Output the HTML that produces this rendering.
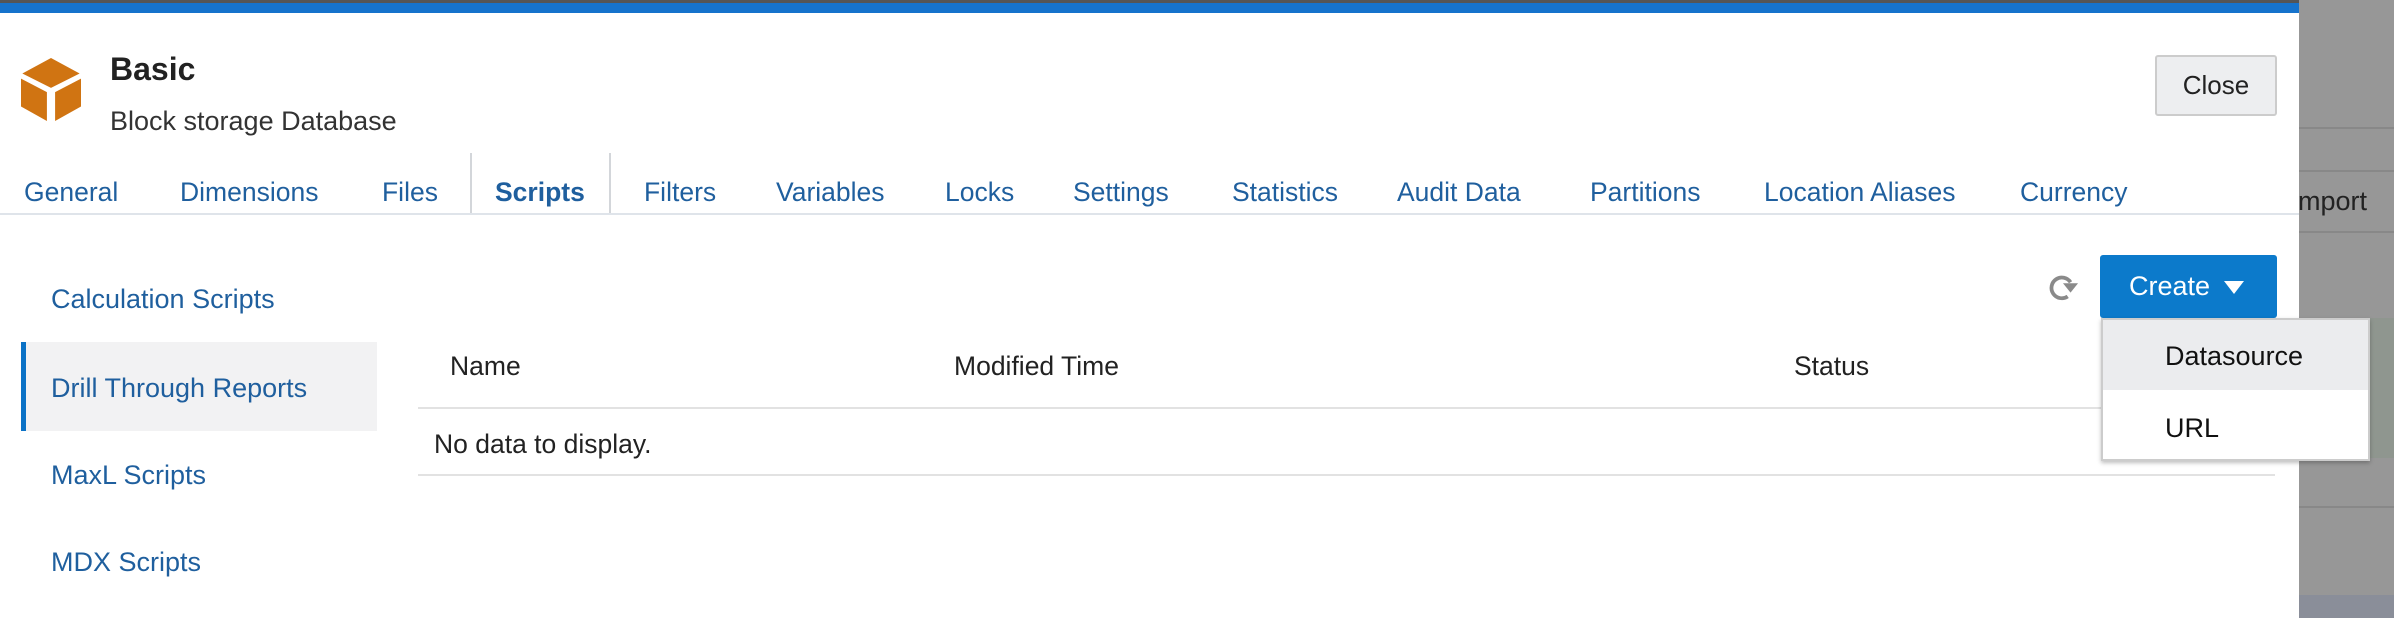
<!DOCTYPE html>
<html><head><meta charset="utf-8"><style>
*{margin:0;padding:0;box-sizing:border-box}
body{width:2394px;height:618px;overflow:hidden;background:#999;font-family:"Liberation Sans",sans-serif;position:relative}
.a{position:absolute;white-space:nowrap}
.tab{position:absolute;top:174px;font-size:26.5px;color:#1f5f9e;line-height:36px}
.nav{position:absolute;left:51px;font-size:27px;color:#1f5f9e;line-height:36px}
.th{position:absolute;top:348px;font-size:26.5px;color:#222;line-height:36px}
</style></head><body>
<div class="a" style="left:0;top:0;width:2394px;height:3px;background:#555"></div>
<div class="a" style="left:2299px;top:0;width:95px;height:618px;background:#979797"></div>
<div class="a" style="left:2299px;top:127px;width:95px;height:2px;background:#888"></div>
<div class="a" style="left:2299px;top:170px;width:95px;height:2px;background:#888"></div>
<div class="a" style="left:2299px;top:231px;width:95px;height:2px;background:#888"></div>
<div class="a" style="left:2299px;top:318px;width:95px;height:140px;background:#8f968f"></div>
<div class="a" style="left:2299px;top:506px;width:95px;height:2px;background:#888"></div>
<div class="a" style="left:2299px;top:595px;width:95px;height:23px;background:#8a8e99"></div>
<div class="a" style="left:2298px;top:186px;font-size:27px;color:#222">mport</div>
<div class="a" style="left:0;top:3px;width:2299px;height:615px;background:#fff"></div>
<div class="a" style="left:0;top:3px;width:2299px;height:10px;background:#1673cc"></div>
<svg class="a" style="left:21px;top:58px" width="60" height="64" viewBox="0 0 44 62" preserveAspectRatio="none">
<path d="M22 0 L43 15 L22 29 L1 15 Z" fill="#d07412"/>
<path d="M0 20 L19 33 L19 61 L0 47 Z" fill="#d07412"/>
<path d="M44 20 L25 33 L25 61 L44 47 Z" fill="#d07412"/>
</svg>
<div class="a" style="left:110px;top:50px;font-size:32px;font-weight:bold;color:#222;line-height:38px">Basic</div>
<div class="a" style="left:110px;top:103px;font-size:27px;color:#333;line-height:36px">Block storage Database</div>
<div class="a" style="left:2155px;top:55px;width:122px;height:61px;background:#edeef0;border:2px solid #ccc;border-radius:3px;font-size:26px;color:#222;text-align:center;line-height:57px">Close</div>
<div class="tab" style="left:24px">General</div>
<div class="tab" style="left:180px">Dimensions</div>
<div class="tab" style="left:382px">Files</div>
<div class="tab" style="left:495px;font-weight:bold">Scripts</div>
<div class="tab" style="left:644px">Filters</div>
<div class="tab" style="left:776px">Variables</div>
<div class="tab" style="left:945px">Locks</div>
<div class="tab" style="left:1073px">Settings</div>
<div class="tab" style="left:1232px">Statistics</div>
<div class="tab" style="left:1397px">Audit Data</div>
<div class="tab" style="left:1590px">Partitions</div>
<div class="tab" style="left:1764px">Location Aliases</div>
<div class="tab" style="left:2020px">Currency</div>
<div class="a" style="left:470px;top:153px;width:2px;height:61px;background:#d3d6da"></div>
<div class="a" style="left:609px;top:153px;width:2px;height:61px;background:#d3d6da"></div>
<div class="a" style="left:0;top:213px;width:2299px;height:2px;background:#dfe4ea"></div>
<div class="nav" style="top:281px">Calculation Scripts</div>
<div class="a" style="left:21px;top:342px;width:356px;height:89px;background:#f2f2f3;border-left:5px solid #0b72c6"></div>
<div class="nav" style="top:370px">Drill Through Reports</div>
<div class="nav" style="top:457px">MaxL Scripts</div>
<div class="nav" style="top:544px">MDX Scripts</div>
<div class="th" style="left:450px">Name</div>
<div class="th" style="left:954px">Modified Time</div>
<div class="th" style="left:1794px">Status</div>
<div class="a" style="left:418px;top:407px;width:1857px;height:2px;background:#e2e2e2"></div>
<div class="a" style="left:434px;top:426px;font-size:26.5px;color:#222;line-height:36px">No data to display.</div>
<div class="a" style="left:418px;top:474px;width:1857px;height:2px;background:#e2e2e2"></div>
<svg class="a" style="left:2047px;top:272px" width="32" height="30" viewBox="0 0 34 30">
<path d="M25 10 A11 11 0 1 0 22 25" fill="none" stroke="#8a8a8a" stroke-width="4"/>
<path d="M17 11 L33 11 L25 21 Z" fill="#8a8a8a"/>
</svg>
<div class="a" style="left:2100px;top:255px;width:177px;height:63px;background:#0c7acb;border-radius:3px"></div>
<div class="a" style="left:2129px;top:268px;font-size:27px;color:#fff;line-height:36px">Create</div>
<svg class="a" style="left:2224px;top:281px" width="20" height="13"><path d="M0 0 L20 0 L10 13 Z" fill="#fff"/></svg>
<div class="a" style="left:2101px;top:318px;width:269px;height:143px;background:#fff;border:2px solid #ccc;box-shadow:0 2px 4px rgba(0,0,0,.25)"></div>
<div class="a" style="left:2103px;top:320px;width:265px;height:70px;background:#ebecee"></div>
<div class="a" style="left:2165px;top:338px;font-size:27px;color:#111;line-height:36px">Datasource</div>
<div class="a" style="left:2165px;top:410px;font-size:27px;color:#111;line-height:36px">URL</div>
</body></html>
